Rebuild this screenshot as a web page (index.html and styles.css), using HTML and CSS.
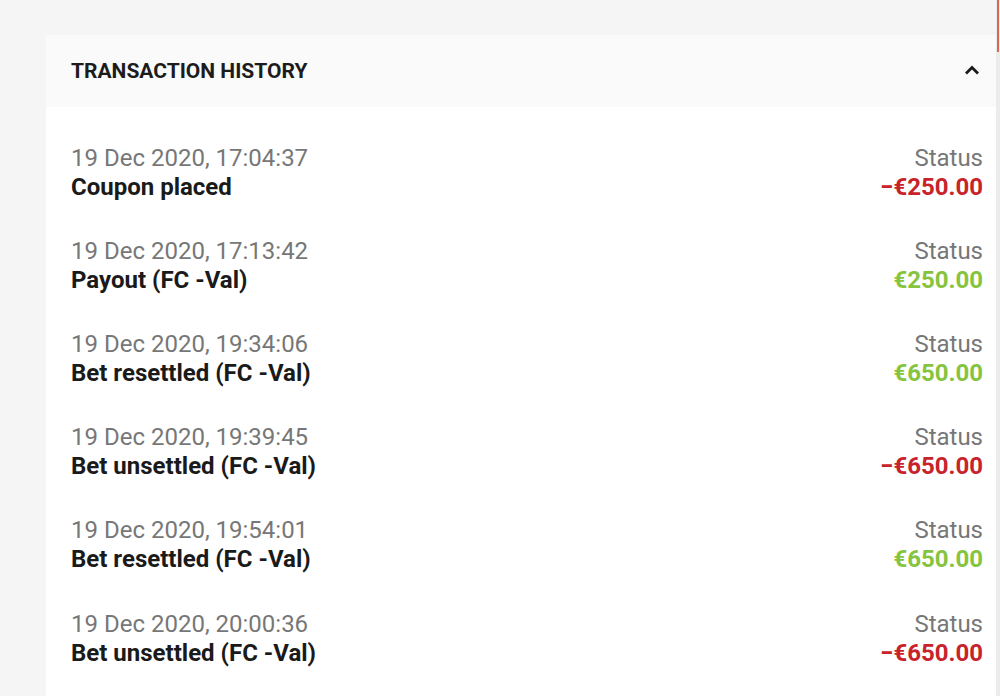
FILE: index.html
```html
<!DOCTYPE html>
<html>
<head>
<meta charset="utf-8">
<link rel="stylesheet" href="styles.css">
</head>
<body>
<div class="page">
  <section class="card">
    <header class="card-head">
      <h2 class="card-title">TRANSACTION HISTORY</h2>
      <svg class="chevron" width="16" height="10" viewBox="0 0 16 10"><path d="M2 8.5 L8 2.5 L14 8.5" fill="none" stroke="#1a1a1a" stroke-width="2.8"/></svg>
    </header>
    <div class="list">
      <div class="row">
        <div class="left"><div class="date">19 Dec 2020, 17:04:37</div><div class="desc">Coupon placed</div></div>
        <div class="right"><div class="status">Status</div><div class="amount neg">−€250.00</div></div>
      </div>
      <div class="row">
        <div class="left"><div class="date">19 Dec 2020, 17:13:42</div><div class="desc">Payout (FC -Val)</div></div>
        <div class="right"><div class="status">Status</div><div class="amount pos">€250.00</div></div>
      </div>
      <div class="row">
        <div class="left"><div class="date">19 Dec 2020, 19:34:06</div><div class="desc">Bet resettled (FC -Val)</div></div>
        <div class="right"><div class="status">Status</div><div class="amount pos">€650.00</div></div>
      </div>
      <div class="row">
        <div class="left"><div class="date">19 Dec 2020, 19:39:45</div><div class="desc">Bet unsettled (FC -Val)</div></div>
        <div class="right"><div class="status">Status</div><div class="amount neg">−€650.00</div></div>
      </div>
      <div class="row">
        <div class="left"><div class="date">19 Dec 2020, 19:54:01</div><div class="desc">Bet resettled (FC -Val)</div></div>
        <div class="right"><div class="status">Status</div><div class="amount pos">€650.00</div></div>
      </div>
      <div class="row">
        <div class="left"><div class="date">19 Dec 2020, 20:00:36</div><div class="desc">Bet unsettled (FC -Val)</div></div>
        <div class="right"><div class="status">Status</div><div class="amount neg">−€650.00</div></div>
      </div>
    </div>
  </section>
  <div class="edge"><div class="edge-mark"></div></div>
</div>
</body>
</html>
```

FILE: styles.css
```css
html, body {
  margin: 0;
  padding: 0;
  height: 100%;
  overflow: hidden;
  background: #f5f5f5;
  font-family: Roboto, "Liberation Sans", sans-serif;
}
.page {
  display: flex;
  height: 100%;
  padding-top: 35px;
  box-sizing: border-box;
}
.card {
  margin-left: 46px;
  flex: 1;
  background: #ffffff;
  display: flex;
  flex-direction: column;
}
.card-head {
  height: 72px;
  background: #fafafa;
  display: flex;
  align-items: center;
  justify-content: space-between;
  padding: 0 16px 0 25px;
}
.card-title {
  margin: 0;
  font-size: 21px;
  font-weight: 700;
  color: #1c1c1c;
  letter-spacing: 0;
}
.chevron {
  display: block;
  margin-top: -2px;
}
.list {
  padding: 36.6px 13px 0 25px;
  display: flex;
  flex-direction: column;
  gap: 35.2px;
}
.row {
  display: flex;
  justify-content: space-between;
  font-size: 24px;
  line-height: 29px;
}
.date, .status {
  color: #777777;
}
.desc {
  font-weight: 700;
  color: #1a1a1a;
}
.right {
  text-align: right;
}
.amount {
  font-weight: 700;
}
.neg { color: #c8232b; }
.pos { color: #86c440; }
.edge {
  width: 4px;
  margin-top: -35px;
  background: #ececec;
}
.edge-mark {
  height: 52px;
  width: 2px;
  margin-left: 1px;
  background: #d9694a;
}
```
